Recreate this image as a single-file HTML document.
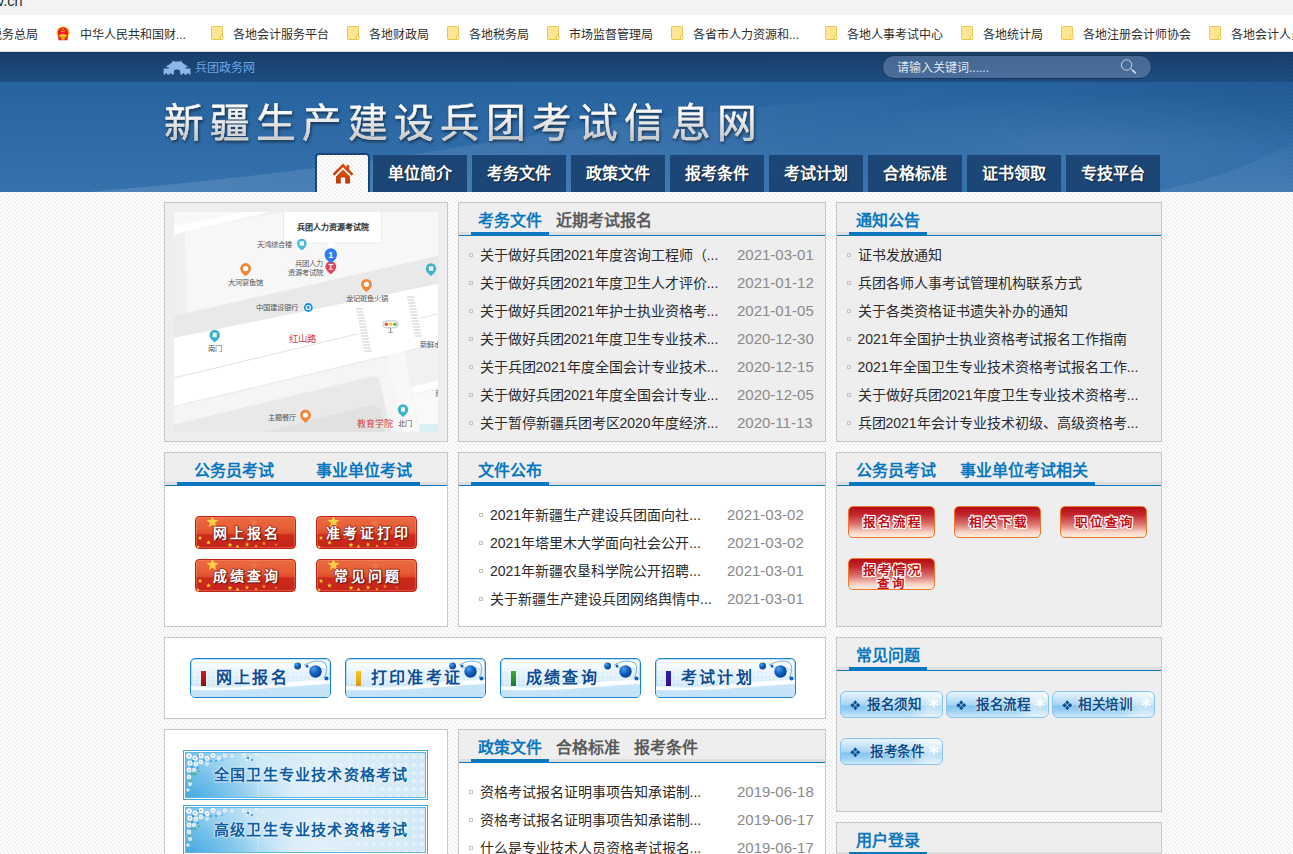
<!DOCTYPE html>
<html lang="zh-CN">
<head>
<meta charset="utf-8">
<title>新疆生产建设兵团考试信息网</title>
<style>
*{margin:0;padding:0;box-sizing:border-box;}
html,body{width:1293px;height:854px;overflow:hidden;}
body{font-family:"Liberation Sans",sans-serif;font-size:14px;color:#222;position:relative;
  background:#f4f4f4 repeating-linear-gradient(45deg,#ffffff 0,#ffffff 1.414px,#efefef 1.414px,#efefef 2.828px);}
a{color:inherit;text-decoration:none;}
.abs{position:absolute;}
/* browser chrome */
#urlbar{position:absolute;left:0;top:0;width:1293px;height:15px;background:#f1f3f4;overflow:hidden;}
#urlbar span{position:absolute;left:-3px;top:-7px;font-size:14.5px;line-height:16px;color:#2a2a2a;white-space:nowrap;}
#bm{position:absolute;left:0;top:15px;width:1293px;height:37px;background:#fff;overflow:hidden;border-bottom:1px solid #dadce0;}
#bm .t{position:absolute;top:12.5px;font-size:12px;line-height:14px;color:#2e2e2e;white-space:nowrap;}
#bm .f{position:absolute;top:11px;width:13px;height:14px;}
/* header */
#topbar{position:absolute;left:0;top:52px;width:1293px;height:30px;
  background:repeating-linear-gradient(45deg,rgba(0,0,0,0) 0,rgba(0,0,0,0) 1.414px,rgba(0,0,20,.09) 1.414px,rgba(0,0,20,.09) 2.828px),linear-gradient(#143a63 0,#19426e 2px,#1f5086 100%);}
#head{position:absolute;left:0;top:82px;width:1293px;height:110px;overflow:hidden;
  background:repeating-linear-gradient(45deg,rgba(0,0,0,0) 0,rgba(0,0,0,0) 1.414px,rgba(0,0,30,.07) 1.414px,rgba(0,0,30,.07) 2.828px),linear-gradient(#2866a4,#3876b3);}
#title{position:absolute;left:164px;top:96px;font-size:39.700px;font-weight:500;line-height:54px;letter-spacing:6.050px;white-space:nowrap;color:#ebebeb;background:linear-gradient(#ffffff 25%,#c6c6c6 82%);-webkit-background-clip:text;background-clip:text;-webkit-text-fill-color:transparent;-webkit-text-stroke:.35px rgba(235,235,235,.9);filter:drop-shadow(1px 2px 1.500px rgba(0,0,0,.5));}
.nav{position:absolute;top:155px;height:37px;width:94px;background:#1c4676;color:#fff;font-weight:bold;font-size:16px;line-height:37px;text-align:center;text-shadow:1px 1px 1px rgba(0,0,0,.6);white-space:nowrap;}
#home{position:absolute;left:315px;top:153px;width:55px;height:39px;background:#1b4577;border-radius:4px 4px 0 0;}
#home i{position:absolute;left:2px;top:2px;width:51px;height:37px;border-radius:2px 2px 0 0;
  background:#f6f6f6 repeating-linear-gradient(45deg,#ffffff 0,#ffffff 1.414px,#efefef 1.414px,#efefef 2.828px);}
/* panels */
.p{position:absolute;background:#eeeeee;border:1px solid #c6c6c6;overflow:hidden;}
.p.w{background:#fff;}
.ph{position:absolute;left:0;top:0;right:0;height:33px;background:#eeeeee;}
.ph:before{content:"";position:absolute;left:0;right:0;top:29px;height:3px;background:#dedede;}
.ph:after{content:"";position:absolute;left:0;right:0;top:32px;height:1px;background:#0a78bf;}
.ph b{position:absolute;top:6px;font-size:16px;line-height:24px;color:#0a78bf;white-space:nowrap;}
.ph b.g{color:#5a5a5a;}
.ph u{position:absolute;top:29px;height:4px;background:#0a78bf;z-index:2;}
ul.l{position:absolute;left:0;right:0;list-style:none;}
ul.l li{position:relative;height:28px;line-height:28px;font-size:14px;color:#2b2b2b;white-space:nowrap;}
ul.l li:before{content:"";position:absolute;left:10px;top:12px;width:4px;height:4px;border:1px solid #c4c4c4;box-sizing:border-box;}
ul.l li a{position:absolute;left:20.500px;top:0;}
ul.l li span{position:absolute;left:278px;top:0;color:#8a8a8a;font-size:15px;}
ul.l.i li:before{left:20px;}
ul.l.i li a{left:31px;}
ul.l.i li span{left:268px;}

/* red star buttons */
.rb{position:absolute;width:101px;height:33px;border-radius:4px;border:1px solid #bf2418;overflow:hidden;
 background:linear-gradient(#ea6a40 0,#e65c35 40%,#dd4a2b 55%,#cf2b1c 57%,#c6241b 100%);box-shadow:inset 0 0 0 1px rgba(255,160,120,.35);}
.rb svg{position:absolute;left:0;top:0;width:99px;height:31px;}
.rb span{position:absolute;left:0;right:0;top:.5px;line-height:32px;text-align:center;font-family:"Liberation Serif",serif;font-weight:bold;font-size:14px;letter-spacing:3px;text-indent:3px;color:#fff;white-space:nowrap;
 text-shadow:1px 1px 0 #7c1509,-1px 0 0 #9c2412,0 -1px 0 #9c2412,1px 0 0 #7c1509,0 1px 0 #7c1509;}
/* red gradient buttons */
.rg{position:absolute;width:87px;height:32px;border-radius:5px;border:1px solid #f2772c;overflow:hidden;
 background:linear-gradient(#b60c16 0,#c3262c 25%,#dc7670 58%,#f7d6c8 85%,#fdeee0 100%);}
.rg span{position:absolute;left:0;right:0;top:.5px;line-height:31px;text-align:center;font-family:"Liberation Serif",serif;font-weight:bold;font-size:12.500px;letter-spacing:2px;text-indent:2px;color:#c1101a;white-space:nowrap;
 text-shadow:1px 1px 0 #fff,-1px 0 0 #fff,0 -1px 0 #fff,1px 0 0 #fff,0 1px 0 #fff,-1px -1px 0 #fff,1px -1px 0 #fff,-1px 1px 0 #fff;}
.rg span.two{line-height:12.500px;top:6px;font-size:12.500px;}
/* blue big buttons */
.bb{position:absolute;width:141px;height:40px;border-radius:5px;border:1px solid #1a86d2;overflow:hidden;background:linear-gradient(#ffffff 0,#eef7fd 30%,#ddeffb 65%,#d2eafa 100%);box-shadow:inset 0 0 0 1px rgba(120,190,235,.5);}
.bb svg{position:absolute;left:0;top:0;width:139px;height:38px;}
.bb i{position:absolute;left:10px;top:12px;width:5px;height:15px;}
.bb span{position:absolute;left:25px;top:0;line-height:37px;font-family:"Liberation Serif",serif;font-weight:bold;font-size:16px;letter-spacing:2.2px;color:#0d4d93;white-space:nowrap;text-shadow:0 0 2px #fff,0 0 2px #fff;}
/* small blue buttons */
.sb{position:absolute;width:103px;height:27px;border-radius:6px;border:1px solid #86c4ec;overflow:hidden;
 background:linear-gradient(#e9f5fd 0,#c2e2f7 30%,#a5d5f4 52%,#80c4ef 56%,#9fd2f3 78%,#cfe9f9 100%);}
.sb:after{content:"";position:absolute;right:0;top:0;width:34px;height:25px;background:linear-gradient(90deg,rgba(255,255,255,0),rgba(255,255,255,.5) 60%,rgba(255,255,255,.45));}
.sb svg.d{position:absolute;left:8.500px;top:8px;width:10.500px;height:10.500px;right:auto;z-index:2;}
.sb span{position:absolute;z-index:2;top:0;line-height:25px;font-family:"Liberation Serif",serif;font-weight:bold;font-size:13.5px;letter-spacing:.6px;color:#0d4f8c;white-space:nowrap;text-shadow:0 0 1px #fff,0 0 2px #fff;}
.sb svg{position:absolute;right:0;top:1px;width:22px;height:22px;z-index:2;}
/* banners */
.bn{position:absolute;left:18px;width:245px;height:50px;border:1px solid #3fa5e1;background:#fff;padding:1px;}
.bn div{position:relative;width:241px;height:46px;border:1px solid #5fb6e7;overflow:hidden;background:linear-gradient(100deg,#6dbde9 0,#9ad2ef 12%,#cde8f6 30%,#e3f2fa 55%,#e8f4fb 100%);}
.bn svg{position:absolute;left:0;top:0;width:239px;height:44px;}
.bn span{position:absolute;left:28px;top:0;line-height:45px;font-family:"Liberation Serif",serif;font-weight:bold;font-size:15px;letter-spacing:1.2px;color:#0c5ea3;white-space:nowrap;text-shadow:0 0 2px #fff,0 0 2px #fff,0 0 1px #fff;}
</style>
</head>
<body>
<div id="urlbar"><span>v.cn</span></div>
<div id="bm">
<span class="t" style="left:-10px">税务总局</span>
<svg class="abs" style="left:56px;top:11px;width:14px;height:15px" viewBox="0 0 14 15"><circle cx="7" cy="6.8" r="6.6" fill="#f7d224"/><circle cx="7" cy="6.6" r="5.4" fill="#ee1c25"/><path d="M2 10 L12 10 L11.5 14.3 L2.5 14.3 Z" fill="#e22a1e"/><path d="M3.2 9.2 Q7 6.8 10.8 9.2 L10.2 11 L3.8 11 Z" fill="#f9c623"/><circle cx="7" cy="12.2" r="1.9" fill="#f3a21b"/><path d="M4.5 4.8 Q7 6.3 9.5 4.8" stroke="#f7c92a" stroke-width=".8" fill="none"/><circle cx="7" cy="3.2" r=".8" fill="#f7c92a"/></svg>
<span class="t" style="left:80px">中华人民共和国财...</span>
<svg class="f" style="left:211px" viewBox="0 0 13 14"><rect x="0.5" y="0.5" width="11" height="13" rx="1" fill="#ffe692" stroke="#eac54f"/><rect x="9.5" y="9.5" width="2.6" height="4" rx="0.8" fill="#fff3c4" stroke="#eac54f"/></svg><span class="t" style="left:233px">各地会计服务平台</span>
<svg class="f" style="left:347px" viewBox="0 0 13 14"><rect x="0.5" y="0.5" width="11" height="13" rx="1" fill="#ffe692" stroke="#eac54f"/><rect x="9.5" y="9.5" width="2.6" height="4" rx="0.8" fill="#fff3c4" stroke="#eac54f"/></svg><span class="t" style="left:369px">各地财政局</span>
<svg class="f" style="left:447px" viewBox="0 0 13 14"><rect x="0.5" y="0.5" width="11" height="13" rx="1" fill="#ffe692" stroke="#eac54f"/><rect x="9.5" y="9.5" width="2.6" height="4" rx="0.8" fill="#fff3c4" stroke="#eac54f"/></svg><span class="t" style="left:469px">各地税务局</span>
<svg class="f" style="left:547px" viewBox="0 0 13 14"><rect x="0.5" y="0.5" width="11" height="13" rx="1" fill="#ffe692" stroke="#eac54f"/><rect x="9.5" y="9.5" width="2.6" height="4" rx="0.8" fill="#fff3c4" stroke="#eac54f"/></svg><span class="t" style="left:569px">市场监督管理局</span>
<svg class="f" style="left:671px" viewBox="0 0 13 14"><rect x="0.5" y="0.5" width="11" height="13" rx="1" fill="#ffe692" stroke="#eac54f"/><rect x="9.5" y="9.5" width="2.6" height="4" rx="0.8" fill="#fff3c4" stroke="#eac54f"/></svg><span class="t" style="left:693px">各省市人力资源和...</span>
<svg class="f" style="left:825px" viewBox="0 0 13 14"><rect x="0.5" y="0.5" width="11" height="13" rx="1" fill="#ffe692" stroke="#eac54f"/><rect x="9.5" y="9.5" width="2.6" height="4" rx="0.8" fill="#fff3c4" stroke="#eac54f"/></svg><span class="t" style="left:847px">各地人事考试中心</span>
<svg class="f" style="left:961px" viewBox="0 0 13 14"><rect x="0.5" y="0.5" width="11" height="13" rx="1" fill="#ffe692" stroke="#eac54f"/><rect x="9.5" y="9.5" width="2.6" height="4" rx="0.8" fill="#fff3c4" stroke="#eac54f"/></svg><span class="t" style="left:983px">各地统计局</span>
<svg class="f" style="left:1061px" viewBox="0 0 13 14"><rect x="0.5" y="0.5" width="11" height="13" rx="1" fill="#ffe692" stroke="#eac54f"/><rect x="9.5" y="9.5" width="2.6" height="4" rx="0.8" fill="#fff3c4" stroke="#eac54f"/></svg><span class="t" style="left:1083px">各地注册会计师协会</span>
<svg class="f" style="left:1209px" viewBox="0 0 13 14"><rect x="0.5" y="0.5" width="11" height="13" rx="1" fill="#ffe692" stroke="#eac54f"/><rect x="9.5" y="9.5" width="2.6" height="4" rx="0.8" fill="#fff3c4" stroke="#eac54f"/></svg><span class="t" style="left:1231px">各地会计人员继续教育</span>
</div>
<div id="topbar"></div>
<div id="head"><svg class="abs" style="left:0;top:0;width:1293px;height:110px" viewBox="0 0 1293 110" preserveAspectRatio="none"><defs><linearGradient id="sw" x1="0" y1="0" x2="1" y2="0"><stop offset="0" stop-color="#fff" stop-opacity=".13"/><stop offset=".5" stop-color="#fff" stop-opacity=".07"/><stop offset="1" stop-color="#fff" stop-opacity="0"/></linearGradient><linearGradient id="sw2" x1="0" y1="0" x2="0" y2="1"><stop offset="0" stop-color="#fff" stop-opacity=".02"/><stop offset="1" stop-color="#fff" stop-opacity=".08"/></linearGradient><radialGradient id="gl" cx=".5" cy=".5" r=".5"><stop offset="0" stop-color="#fff" stop-opacity=".07"/><stop offset="1" stop-color="#fff" stop-opacity="0"/></radialGradient><linearGradient id="dk" x1="0" y1="0" x2="1" y2="0"><stop offset="0" stop-color="#0b2a55" stop-opacity="0"/><stop offset="1" stop-color="#0b2a55" stop-opacity=".16"/></linearGradient><linearGradient id="dkv" x1="0" y1="0" x2="0" y2="1"><stop offset="0" stop-color="#fff"/><stop offset="1" stop-color="#000"/></linearGradient><mask id="dm2"><rect x="1000" y="0" width="293" height="70" fill="url(#dkv)"/></mask></defs>
<path d="M90 110 Q300 92 480 62 T860 16 L960 10 L960 110 Z" fill="url(#sw)"/>
<path d="M1150 110 Q1230 96 1293 60 L1293 110 Z" fill="url(#sw2)"/>
<ellipse cx="1080" cy="62" rx="260" ry="52" fill="url(#gl)"/>
<rect x="1000" y="0" width="293" height="70" fill="url(#dk)" mask="url(#dm2)"/>
</svg></div>
<div id="title">新疆生产建设兵团考试信息网</div>
<div id="home"><i></i></div>

<svg class="abs" style="left:163px;top:60px;width:28px;height:15px" viewBox="0 0 28 15"><path fill="#8db7e6" d="M9.5 0.6 L10.3 0.6 L10.6 1.6 L17.4 1.6 L17.7 0.6 L18.5 0.6 L18.6 2 Q21 4.6 24.6 6.2 L24.6 7.2 L22.4 7.2 L22.4 8.4 L27.4 8.4 L27.4 14.6 L25.6 14.6 L25.6 13.2 L24 13.2 L24 14.6 L21.2 14.6 L21.2 13.2 L19.6 13.2 L19.6 14.6 L17.2 14.6 L17.2 12 Q17.2 9.6 14 9.6 Q10.8 9.6 10.8 12 L10.8 14.6 L8.4 14.6 L8.4 13.2 L6.8 13.2 L6.8 14.6 L4 14.6 L4 13.2 L2.4 13.2 L2.4 14.6 L0.6 14.6 L0.6 8.4 L5.6 8.4 L5.6 7.2 L3.4 7.2 L3.4 6.2 Q7 4.6 9.4 2 Z"/></svg>
<div class="abs" style="left:195px;top:60px;font-size:12px;line-height:16px;color:#6aa6ec;white-space:nowrap;">兵团政务网</div>
<div class="abs" id="search" style="left:882px;top:55px;width:270px;height:24px;border-radius:12px;background:rgba(135,160,198,.42);border:1px solid #15345a;"></div>
<div class="abs" style="left:897px;top:60px;font-size:12px;line-height:16px;color:#dfe8f3;white-space:nowrap;">请输入关键词......</div>
<svg class="abs" style="left:1118px;top:57px;width:22px;height:20px" viewBox="0 0 22 20"><circle cx="8.600" cy="8" r="5.200" fill="none" stroke="#d5dde7" stroke-width=".9"/><path d="M12.600 11.600 L14.400 13.200" stroke="#d5dde7" stroke-width=".9" stroke-linecap="round"/><path d="M14.600 13.400 L17.400 15.800" stroke="#d5dde7" stroke-width="1.700" stroke-linecap="round"/></svg>
<svg class="abs" style="left:331px;top:162px;width:24px;height:23px" viewBox="0 0 24 23"><defs><linearGradient id="hg" x1="0" y1="0" x2="0" y2="1"><stop offset="0" stop-color="#e5510f"/><stop offset="1" stop-color="#b53a06"/></linearGradient></defs><path fill="url(#hg)" d="M12 1.6 L15.6 5.2 L15.6 3 L18.2 3 L18.2 7.8 L22.4 12 L20.6 13.6 L12 5.2 L3.4 13.6 L1.6 12 Z"/><path fill="url(#hg)" d="M12 7.6 L19 14.4 L19 21.6 L14.2 21.6 L14.2 15.6 L9.8 15.6 L9.8 21.6 L5 21.6 L5 14.4 Z"/></svg>
<a class="nav" style="left:373px">单位简介</a>
<a class="nav" style="left:472px">考务文件</a>
<a class="nav" style="left:571px">政策文件</a>
<a class="nav" style="left:670px">报考条件</a>
<a class="nav" style="left:769px">考试计划</a>
<a class="nav" style="left:868px">合格标准</a>
<a class="nav" style="left:967px">证书领取</a>
<a class="nav" style="left:1066px">专技平台</a>

<!-- ROW 1 -->
<div class="p" id="p1" style="left:164px;top:202px;width:284px;height:240px;"><svg class="abs" style="left:9px;top:9px;width:264px;height:220px" viewBox="0 0 264 220" font-family="Liberation Sans, sans-serif">
<rect width="264" height="220" fill="#f1f1f1"/>
<!-- top-left road -->
<polygon points="0,0 95,0 0,24" fill="#f8f8f8"/>
<polygon points="0,14 70,0 95,0 0,22" fill="#ffffff"/>
<!-- north block -->
<polygon points="11,19 264,-30 264,44 13,101" fill="#f7f7f7"/>
<polygon points="0,24 11,19 13,101 0,105" fill="#efefef"/>
<!-- sidewalk band -->
<polygon points="0,104 13,101 264,44 264,72 0,126" fill="#e9e9e9"/>
<!-- main road -->
<polygon points="0,126 264,72 264,132 236,138 213,143.500 0,195" fill="#ffffff"/>
<polyline points="0,166 183,122" fill="none" stroke="#e2e2e2" stroke-width="1"/>
<polyline points="247,106 264,102" fill="none" stroke="#e2e2e2" stroke-width="1"/>
<!-- south block -->
<path d="M0 194.500 L207 145.300 Q213.500 144 216 150 L228 220 L0 220 Z" fill="#f5f5f5"/>
<path d="M0 194.500 L207 145.300 Q213.500 144 216 150 L228 220" fill="none" stroke="#e3e3e3" stroke-width=".8"/>
<path d="M0 212.500 L198 164.500 Q203.500 163.500 205.500 168.500 L217.500 220 L0 220 Z" fill="#e9e9e9"/>
<polygon points="90,220 199,192.500 207,197 211,220" fill="#e1e1e1"/>
<!-- vertical road -->
<polygon points="213,143.500 231,139 245,220 228,220" fill="#f8f8f8"/>
<!-- right-bottom block -->
<path d="M231 143 Q231 139.500 236 138 L264 131.500 L264 220 L245 220 Z" fill="#f1f1f1"/>
<path d="M231 143 Q231 139.500 236 138 L264 131.500" fill="none" stroke="#e3e3e3" stroke-width=".8"/>
<polygon points="237.500,175 264,168.600 264,175.500 238.700,182" fill="#ffffff"/>
<polygon points="239,183 264,177 264,220 245.500,220" fill="#f9f9f9"/>
<rect x="245.500" y="212" width="18.500" height="8" fill="#d9eff3"/>
<!-- crosswalks -->
<g stroke="#dcdcdc" stroke-width="1.4">
<path d="M182 97h7M182.6 100h7M183.2 103h7M183.8 106h7M184.4 109h7M185 112h7M185.6 115h7M186.2 118h7M186.8 121h7M187.4 124h7M188 127h7M188.6 130h7M189.2 133h7M189.8 136h7M190.4 139h7"/>
<path d="M233 85h7M233.6 88h7M234.2 91h7M234.8 94h7M235.4 97h7M236 100h7M236.6 103h7M237.2 106h7M237.8 109h7M238.4 112h7M239 115h7M239.6 118h7M240.2 121h7M240.8 124h7"/>
</g>
<!-- info window -->
<rect x="109.500" y="-2" width="98" height="33" fill="#ffffff" stroke="#e2e2e2" stroke-width="0.6"/>
<polygon points="152,30.600 162,30.600 157,36" fill="#ffffff"/>
<text x="158.600" y="17.500" font-size="8" font-weight="bold" fill="#333" text-anchor="middle">兵团人力资源考试院</text>
<!-- labels -->
<g font-size="7.300" fill="#555" transform="translate(0,-0.900)">
<text x="83" y="35.500">天鸿综合楼</text>
<text x="149" y="54.500" text-anchor="end">兵团人力</text>
<text x="149" y="64.300" text-anchor="end">资源考试院</text>
<text x="71.600" y="74.200" text-anchor="middle">大河宴鱼馆</text>
<text x="192.500" y="89.700" text-anchor="middle">龙记斑鱼火锅</text>
<text x="82" y="98.600">中国建设银行</text>
<text x="40.700" y="140" text-anchor="middle">南门</text>
<text x="246" y="135.800">新鲜水</text>
<text x="94" y="208.800">主题餐厅</text>
<text x="223.500" y="214.500">北门</text>
<text x="261" y="185">商</text>
</g>
<text x="128" y="129.700" font-size="9.400" fill="#d63a42" text-anchor="middle">红山路</text>
<text x="201" y="214.600" font-size="9" fill="#d63a42" text-anchor="middle">教育学院</text>
<path d="M123.00 31.50 A4.8 4.8 0 1 1 132.60 31.50 Q132.60 35.10 127.80 38.32 Q123.00 35.10 123.00 31.50 Z" fill="#49b9d9"/><rect x="125.600" y="29.300" width="4.400" height="4.400" fill="#e9f7fb"/><path d="M66.20 56.50 A5.4 5.4 0 1 1 77.00 56.50 Q77.00 60.55 71.60 64.17 Q66.20 60.55 66.20 56.50 Z" fill="#f0873c"/><circle cx="71.600" cy="56.500" r="2.600" fill="#fff"/><path d="M187.10 72.30 A5.4 5.4 0 1 1 197.90 72.30 Q197.90 76.35 192.50 79.97 Q187.10 76.35 187.10 72.30 Z" fill="#f0873c"/><circle cx="192.500" cy="72.300" r="2.600" fill="#fff"/><path d="M126.10 203.00 A5.4 5.4 0 1 1 136.90 203.00 Q136.90 207.05 131.50 210.67 Q126.10 207.05 126.10 203.00 Z" fill="#f0873c"/><circle cx="131.500" cy="203" r="2.600" fill="#fff"/><path d="M35.50 123.00 A5.2 5.2 0 1 1 45.90 123.00 Q45.90 126.90 40.70 130.38 Q35.50 126.90 35.50 123.00 Z" fill="#3fb1cf"/><rect x="38.700" y="120.800" width="4" height="4.400" fill="#e9f7fb"/><path d="M251.80 56.50 A5.2 5.2 0 1 1 262.20 56.50 Q262.20 60.40 257.00 63.88 Q251.80 60.40 251.80 56.50 Z" fill="#3fb1cf"/><rect x="254.800" y="54.300" width="4.400" height="4.400" fill="#e9f7fb"/><path d="M223.80 197.50 A5.2 5.2 0 1 1 234.20 197.50 Q234.20 201.40 229.00 204.88 Q223.80 201.40 223.80 197.50 Z" fill="#3fb1cf"/><rect x="227" y="195.300" width="4" height="4.400" fill="#e9f7fb"/><circle cx="134.300" cy="95.500" r="4.400" fill="#1b8fe6"/><circle cx="134.300" cy="95.500" r="2" fill="none" stroke="#fff" stroke-width="1.200"/><path d="M151.40 54.60 A5.4 5.4 0 1 1 162.20 54.60 Q162.20 58.65 156.80 62.27 Q151.40 58.65 151.40 54.60 Z" fill="#e0455c"/><path d="M154.300 52.600l5 0M156.800 52.600l0 4.600M154.800 57.200l4 0" stroke="#fff" stroke-width="1" fill="none"/><path d="M150.60 42.50 A6.2 6.2 0 1 1 163.00 42.50 Q163.00 47.15 156.80 51.30 Q150.60 47.15 150.60 42.50 Z" fill="#2c7cf2"/><text x="156.800" y="45.800" font-size="9" font-weight="bold" fill="#fff" text-anchor="middle">1</text><rect x="216" y="116" width="1.200" height="4.500" fill="#999"/><rect x="214.400" y="120" width="4.400" height=".9" fill="#999"/><rect x="208.800" y="108.800" width="15.200" height="7" rx="3.500" fill="#fff" stroke="#aaa" stroke-width="0.700"/><circle cx="212.300" cy="112.300" r="1.800" fill="#e8503e"/><circle cx="216.600" cy="112.300" r="1.800" fill="#f1c232"/><circle cx="220.900" cy="112.300" r="1.800" fill="#57b85c"/></svg></div>
<div class="p" id="p2" style="left:458px;top:202px;width:368px;height:240px;">
  <div class="ph"><b style="left:19px">考务文件</b><b class="g" style="left:97px">近期考试报名</b><u style="left:12px;width:78px"></u></div>
  <ul class="l" style="top:38px">
    <li><a>关于做好兵团2021年度咨询工程师（...</a><span>2021-03-01</span></li>
    <li><a>关于做好兵团2021年度卫生人才评价...</a><span>2021-01-12</span></li>
    <li><a>关于做好兵团2021年护士执业资格考...</a><span>2021-01-05</span></li>
    <li><a>关于做好兵团2021年度卫生专业技术...</a><span>2020-12-30</span></li>
    <li><a>关于兵团2021年度全国会计专业技术...</a><span>2020-12-15</span></li>
    <li><a>关于做好兵团2021年度全国会计专业...</a><span>2020-12-05</span></li>
    <li><a>关于暂停新疆兵团考区2020年度经济...</a><span>2020-11-13</span></li>
  </ul>
</div>
<div class="p" id="p3" style="left:836px;top:202px;width:326px;height:240px;">
  <div class="ph"><b style="left:19px">通知公告</b><u style="left:12px;width:78px"></u></div>
  <ul class="l" style="top:38px">
    <li><a>证书发放通知</a></li>
    <li><a>兵团各师人事考试管理机构联系方式</a></li>
    <li><a>关于各类资格证书遗失补办的通知</a></li>
    <li><a>2021年全国护士执业资格考试报名工作指南</a></li>
    <li><a>2021年全国卫生专业技术资格考试报名工作...</a></li>
    <li><a>关于做好兵团2021年度卫生专业技术资格考...</a></li>
    <li><a>兵团2021年会计专业技术初级、高级资格考...</a></li>
  </ul>
</div>

<!-- ROW 2 -->
<div class="p w" id="p4" style="left:164px;top:452px;width:284px;height:175px;">
  <div class="ph"><b style="left:28.5px">公务员考试</b><b style="left:151px">事业单位考试</b><u style="left:12px;width:243px"></u></div>
<a class="rb" style="left:30px;top:63px"><svg viewBox="0 0 99 31"><polygon points="16.5,-1.4 18.1,2.8 22.6,3.0 19.1,5.8 20.3,10.2 16.5,7.7 12.7,10.2 13.9,5.8 10.4,3.0 14.9,2.8" fill="#f9cf45" opacity="1"/><polygon points="4.0,18.6 4.6,20.2 6.3,20.3 5.0,21.3 5.4,22.9 4.0,22.0 2.6,22.9 3.0,21.3 1.7,20.3 3.4,20.2" fill="#ffd92e" opacity="1"/><polygon points="12.5,23.0 13.1,24.7 14.9,24.7 13.5,25.8 14.0,27.5 12.5,26.6 11.0,27.5 11.5,25.8 10.1,24.7 11.9,24.7" fill="#ffd92e" opacity="1"/><polygon points="2.0,28.0 2.5,29.3 3.9,29.4 2.8,30.3 3.2,31.6 2.0,30.8 0.8,31.6 1.2,30.3 0.1,29.4 1.5,29.3" fill="#ffd92e" opacity="1"/><polygon points="34.0,25.4 34.6,27.1 36.5,27.2 35.0,28.3 35.5,30.1 34.0,29.1 32.5,30.1 33.0,28.3 31.5,27.2 33.4,27.1" fill="#ffd92e" opacity="1"/><polygon points="41.5,27.5 42.0,28.8 43.4,28.9 42.3,29.8 42.7,31.1 41.5,30.3 40.3,31.1 40.7,29.8 39.6,28.9 41.0,28.8" fill="#ffd92e" opacity="1"/><polygon points="51.0,25.1 51.6,26.7 53.3,26.8 52.0,27.8 52.4,29.4 51.0,28.5 49.6,29.4 50.0,27.8 48.7,26.8 50.4,26.7" fill="#ffd92e" opacity="0.9"/><polygon points="60.0,27.2 60.4,28.4 61.7,28.4 60.7,29.2 61.1,30.5 60.0,29.8 58.9,30.5 59.3,29.2 58.3,28.4 59.6,28.4" fill="#ffd92e" opacity="0.8"/><polygon points="68.0,24.3 68.5,25.8 70.1,25.8 68.9,26.8 69.3,28.3 68.0,27.4 66.7,28.3 67.1,26.8 65.9,25.8 67.5,25.8" fill="#ffd92e" opacity="0.6"/><polygon points="80.0,25.7 80.4,26.9 81.7,26.9 80.7,27.7 81.1,29.0 80.0,28.3 78.9,29.0 79.3,27.7 78.3,26.9 79.6,26.9" fill="#ffd92e" opacity="0.45"/><polygon points="58.0,1.0 59.2,4.3 62.8,4.5 60.0,6.6 60.9,10.0 58.0,8.1 55.1,10.0 56.0,6.6 53.2,4.5 56.8,4.3" fill="#f08a5a" opacity="0.45"/><polygon points="28.0,18.4 28.4,19.5 29.5,19.5 28.6,20.2 28.9,21.3 28.0,20.7 27.1,21.3 27.4,20.2 26.5,19.5 27.6,19.5" fill="#ffd92e" opacity="0.7"/></svg><span>网上报名</span></a>
<a class="rb" style="left:151px;top:63px"><svg viewBox="0 0 99 31"><polygon points="16.5,-1.4 18.1,2.8 22.6,3.0 19.1,5.8 20.3,10.2 16.5,7.7 12.7,10.2 13.9,5.8 10.4,3.0 14.9,2.8" fill="#f9cf45" opacity="1"/><polygon points="4.0,18.6 4.6,20.2 6.3,20.3 5.0,21.3 5.4,22.9 4.0,22.0 2.6,22.9 3.0,21.3 1.7,20.3 3.4,20.2" fill="#ffd92e" opacity="1"/><polygon points="12.5,23.0 13.1,24.7 14.9,24.7 13.5,25.8 14.0,27.5 12.5,26.6 11.0,27.5 11.5,25.8 10.1,24.7 11.9,24.7" fill="#ffd92e" opacity="1"/><polygon points="2.0,28.0 2.5,29.3 3.9,29.4 2.8,30.3 3.2,31.6 2.0,30.8 0.8,31.6 1.2,30.3 0.1,29.4 1.5,29.3" fill="#ffd92e" opacity="1"/><polygon points="34.0,25.4 34.6,27.1 36.5,27.2 35.0,28.3 35.5,30.1 34.0,29.1 32.5,30.1 33.0,28.3 31.5,27.2 33.4,27.1" fill="#ffd92e" opacity="1"/><polygon points="41.5,27.5 42.0,28.8 43.4,28.9 42.3,29.8 42.7,31.1 41.5,30.3 40.3,31.1 40.7,29.8 39.6,28.9 41.0,28.8" fill="#ffd92e" opacity="1"/><polygon points="51.0,25.1 51.6,26.7 53.3,26.8 52.0,27.8 52.4,29.4 51.0,28.5 49.6,29.4 50.0,27.8 48.7,26.8 50.4,26.7" fill="#ffd92e" opacity="0.9"/><polygon points="60.0,27.2 60.4,28.4 61.7,28.4 60.7,29.2 61.1,30.5 60.0,29.8 58.9,30.5 59.3,29.2 58.3,28.4 59.6,28.4" fill="#ffd92e" opacity="0.8"/><polygon points="68.0,24.3 68.5,25.8 70.1,25.8 68.9,26.8 69.3,28.3 68.0,27.4 66.7,28.3 67.1,26.8 65.9,25.8 67.5,25.8" fill="#ffd92e" opacity="0.6"/><polygon points="80.0,25.7 80.4,26.9 81.7,26.9 80.7,27.7 81.1,29.0 80.0,28.3 78.9,29.0 79.3,27.7 78.3,26.9 79.6,26.9" fill="#ffd92e" opacity="0.45"/><polygon points="58.0,1.0 59.2,4.3 62.8,4.5 60.0,6.6 60.9,10.0 58.0,8.1 55.1,10.0 56.0,6.6 53.2,4.5 56.8,4.3" fill="#f08a5a" opacity="0.45"/><polygon points="28.0,18.4 28.4,19.5 29.5,19.5 28.6,20.2 28.9,21.3 28.0,20.7 27.1,21.3 27.4,20.2 26.5,19.5 27.6,19.5" fill="#ffd92e" opacity="0.7"/></svg><span>准考证打印</span></a>
<a class="rb" style="left:30px;top:106px"><svg viewBox="0 0 99 31"><polygon points="16.5,-1.4 18.1,2.8 22.6,3.0 19.1,5.8 20.3,10.2 16.5,7.7 12.7,10.2 13.9,5.8 10.4,3.0 14.9,2.8" fill="#f9cf45" opacity="1"/><polygon points="4.0,18.6 4.6,20.2 6.3,20.3 5.0,21.3 5.4,22.9 4.0,22.0 2.6,22.9 3.0,21.3 1.7,20.3 3.4,20.2" fill="#ffd92e" opacity="1"/><polygon points="12.5,23.0 13.1,24.7 14.9,24.7 13.5,25.8 14.0,27.5 12.5,26.6 11.0,27.5 11.5,25.8 10.1,24.7 11.9,24.7" fill="#ffd92e" opacity="1"/><polygon points="2.0,28.0 2.5,29.3 3.9,29.4 2.8,30.3 3.2,31.6 2.0,30.8 0.8,31.6 1.2,30.3 0.1,29.4 1.5,29.3" fill="#ffd92e" opacity="1"/><polygon points="34.0,25.4 34.6,27.1 36.5,27.2 35.0,28.3 35.5,30.1 34.0,29.1 32.5,30.1 33.0,28.3 31.5,27.2 33.4,27.1" fill="#ffd92e" opacity="1"/><polygon points="41.5,27.5 42.0,28.8 43.4,28.9 42.3,29.8 42.7,31.1 41.5,30.3 40.3,31.1 40.7,29.8 39.6,28.9 41.0,28.8" fill="#ffd92e" opacity="1"/><polygon points="51.0,25.1 51.6,26.7 53.3,26.8 52.0,27.8 52.4,29.4 51.0,28.5 49.6,29.4 50.0,27.8 48.7,26.8 50.4,26.7" fill="#ffd92e" opacity="0.9"/><polygon points="60.0,27.2 60.4,28.4 61.7,28.4 60.7,29.2 61.1,30.5 60.0,29.8 58.9,30.5 59.3,29.2 58.3,28.4 59.6,28.4" fill="#ffd92e" opacity="0.8"/><polygon points="68.0,24.3 68.5,25.8 70.1,25.8 68.9,26.8 69.3,28.3 68.0,27.4 66.7,28.3 67.1,26.8 65.9,25.8 67.5,25.8" fill="#ffd92e" opacity="0.6"/><polygon points="80.0,25.7 80.4,26.9 81.7,26.9 80.7,27.7 81.1,29.0 80.0,28.3 78.9,29.0 79.3,27.7 78.3,26.9 79.6,26.9" fill="#ffd92e" opacity="0.45"/><polygon points="58.0,1.0 59.2,4.3 62.8,4.5 60.0,6.6 60.9,10.0 58.0,8.1 55.1,10.0 56.0,6.6 53.2,4.5 56.8,4.3" fill="#f08a5a" opacity="0.45"/><polygon points="28.0,18.4 28.4,19.5 29.5,19.5 28.6,20.2 28.9,21.3 28.0,20.7 27.1,21.3 27.4,20.2 26.5,19.5 27.6,19.5" fill="#ffd92e" opacity="0.7"/></svg><span>成绩查询</span></a>
<a class="rb" style="left:151px;top:106px"><svg viewBox="0 0 99 31"><polygon points="16.5,-1.4 18.1,2.8 22.6,3.0 19.1,5.8 20.3,10.2 16.5,7.7 12.7,10.2 13.9,5.8 10.4,3.0 14.9,2.8" fill="#f9cf45" opacity="1"/><polygon points="4.0,18.6 4.6,20.2 6.3,20.3 5.0,21.3 5.4,22.9 4.0,22.0 2.6,22.9 3.0,21.3 1.7,20.3 3.4,20.2" fill="#ffd92e" opacity="1"/><polygon points="12.5,23.0 13.1,24.7 14.9,24.7 13.5,25.8 14.0,27.5 12.5,26.6 11.0,27.5 11.5,25.8 10.1,24.7 11.9,24.7" fill="#ffd92e" opacity="1"/><polygon points="2.0,28.0 2.5,29.3 3.9,29.4 2.8,30.3 3.2,31.6 2.0,30.8 0.8,31.6 1.2,30.3 0.1,29.4 1.5,29.3" fill="#ffd92e" opacity="1"/><polygon points="34.0,25.4 34.6,27.1 36.5,27.2 35.0,28.3 35.5,30.1 34.0,29.1 32.5,30.1 33.0,28.3 31.5,27.2 33.4,27.1" fill="#ffd92e" opacity="1"/><polygon points="41.5,27.5 42.0,28.8 43.4,28.9 42.3,29.8 42.7,31.1 41.5,30.3 40.3,31.1 40.7,29.8 39.6,28.9 41.0,28.8" fill="#ffd92e" opacity="1"/><polygon points="51.0,25.1 51.6,26.7 53.3,26.8 52.0,27.8 52.4,29.4 51.0,28.5 49.6,29.4 50.0,27.8 48.7,26.8 50.4,26.7" fill="#ffd92e" opacity="0.9"/><polygon points="60.0,27.2 60.4,28.4 61.7,28.4 60.7,29.2 61.1,30.5 60.0,29.8 58.9,30.5 59.3,29.2 58.3,28.4 59.6,28.4" fill="#ffd92e" opacity="0.8"/><polygon points="68.0,24.3 68.5,25.8 70.1,25.8 68.9,26.8 69.3,28.3 68.0,27.4 66.7,28.3 67.1,26.8 65.9,25.8 67.5,25.8" fill="#ffd92e" opacity="0.6"/><polygon points="80.0,25.7 80.4,26.9 81.7,26.9 80.7,27.7 81.1,29.0 80.0,28.3 78.9,29.0 79.3,27.7 78.3,26.9 79.6,26.9" fill="#ffd92e" opacity="0.45"/><polygon points="58.0,1.0 59.2,4.3 62.8,4.5 60.0,6.6 60.9,10.0 58.0,8.1 55.1,10.0 56.0,6.6 53.2,4.5 56.8,4.3" fill="#f08a5a" opacity="0.45"/><polygon points="28.0,18.4 28.4,19.5 29.5,19.5 28.6,20.2 28.9,21.3 28.0,20.7 27.1,21.3 27.4,20.2 26.5,19.5 27.6,19.5" fill="#ffd92e" opacity="0.7"/></svg><span>常见问题</span></a>
</div>
<div class="p w" id="p5" style="left:458px;top:452px;width:368px;height:175px;">
  <div class="ph"><b style="left:19px">文件公布</b><u style="left:12px;width:78px"></u></div>
  <ul class="l i" style="top:48px">
    <li><a>2021年新疆生产建设兵团面向社...</a><span>2021-03-02</span></li>
    <li><a>2021年塔里木大学面向社会公开...</a><span>2021-03-02</span></li>
    <li><a>2021年新疆农垦科学院公开招聘...</a><span>2021-03-01</span></li>
    <li><a>关于新疆生产建设兵团网络舆情中...</a><span>2021-03-01</span></li>
  </ul>
</div>
<div class="p" id="p6" style="left:836px;top:452px;width:326px;height:175px;">
  <div class="ph"><b style="left:19px">公务员考试</b><b style="left:123px">事业单位考试相关</b><u style="left:12px;width:246px"></u></div>
<a class="rg" style="left:11px;top:53px"><span>报名流程</span></a>
<a class="rg" style="left:117px;top:53px"><span>相关下载</span></a>
<a class="rg" style="left:223px;top:53px"><span>职位查询</span></a>
<a class="rg" style="left:11px;top:105px"><span class="two">报考情况<br>查询</span></a>
</div>

<!-- ROW 3 -->
<div class="p w" id="p7" style="left:164px;top:637px;width:662px;height:82px;">
<a class="bb" style="left:25px;top:20px"><svg viewBox="0 0 139 38"><defs><radialGradient id="sp" cx=".35" cy=".3" r=".8"><stop offset="0" stop-color="#4fa0e6"/><stop offset=".5" stop-color="#0f5fbf"/><stop offset="1" stop-color="#083a8c"/></radialGradient><pattern id="gd" width="4" height="4" patternUnits="userSpaceOnUse"><rect x=".5" y=".5" width="2.600" height="2.600" fill="#bfe0f6"/></pattern><linearGradient id="gf" x1="0" y1="0" x2="0" y2="1"><stop offset="0" stop-color="#fff" stop-opacity="0"/><stop offset="1" stop-color="#fff" stop-opacity="1"/></linearGradient><mask id="gm"><rect y="8" width="139" height="22" fill="url(#gf)"/></mask></defs>
<rect y="8" width="139" height="22" fill="url(#gd)" mask="url(#gm)" opacity=".75"/>
<path d="M0 27 Q35 31 70 26 T139 21 L139 25 Q100 27 70 30 T0 31 Z" fill="#ffffff" opacity=".9"/>
<path d="M0 31 Q35 32 70 30 T139 25 L139 38 L0 38 Z" fill="#c6e5f8"/><rect y="31" width="139" height="7" fill="url(#gd)" opacity=".9"/>
<path d="M113 6 Q126 -1 134 4 Q138 10 133 19" fill="none" stroke="#5c9bd8" stroke-width=".8"/><path d="M116 9 Q128 6 136 12" fill="none" stroke="#8dbbe6" stroke-width=".6"/>
<circle cx="124.500" cy="12.500" r="6.200" fill="url(#sp)"/><circle cx="106.600" cy="7" r="3.400" fill="url(#sp)"/><circle cx="116" cy="7" r="1.500" fill="#1560b8"/><circle cx="135.500" cy="19.500" r="2" fill="#1560b8"/></svg><i style="background:linear-gradient(#cf1a20,#8c0c10)"></i><span>网上报名</span></a>
<a class="bb" style="left:180px;top:20px"><svg viewBox="0 0 139 38"><defs><radialGradient id="sp" cx=".35" cy=".3" r=".8"><stop offset="0" stop-color="#4fa0e6"/><stop offset=".5" stop-color="#0f5fbf"/><stop offset="1" stop-color="#083a8c"/></radialGradient><pattern id="gd" width="4" height="4" patternUnits="userSpaceOnUse"><rect x=".5" y=".5" width="2.600" height="2.600" fill="#bfe0f6"/></pattern><linearGradient id="gf" x1="0" y1="0" x2="0" y2="1"><stop offset="0" stop-color="#fff" stop-opacity="0"/><stop offset="1" stop-color="#fff" stop-opacity="1"/></linearGradient><mask id="gm"><rect y="8" width="139" height="22" fill="url(#gf)"/></mask></defs>
<rect y="8" width="139" height="22" fill="url(#gd)" mask="url(#gm)" opacity=".75"/>
<path d="M0 27 Q35 31 70 26 T139 21 L139 25 Q100 27 70 30 T0 31 Z" fill="#ffffff" opacity=".9"/>
<path d="M0 31 Q35 32 70 30 T139 25 L139 38 L0 38 Z" fill="#c6e5f8"/><rect y="31" width="139" height="7" fill="url(#gd)" opacity=".9"/>
<path d="M113 6 Q126 -1 134 4 Q138 10 133 19" fill="none" stroke="#5c9bd8" stroke-width=".8"/><path d="M116 9 Q128 6 136 12" fill="none" stroke="#8dbbe6" stroke-width=".6"/>
<circle cx="124.500" cy="12.500" r="6.200" fill="url(#sp)"/><circle cx="106.600" cy="7" r="3.400" fill="url(#sp)"/><circle cx="116" cy="7" r="1.500" fill="#1560b8"/><circle cx="135.500" cy="19.500" r="2" fill="#1560b8"/></svg><i style="background:linear-gradient(#f8c820,#e2960e)"></i><span>打印准考证</span></a>
<a class="bb" style="left:335px;top:20px"><svg viewBox="0 0 139 38"><defs><radialGradient id="sp" cx=".35" cy=".3" r=".8"><stop offset="0" stop-color="#4fa0e6"/><stop offset=".5" stop-color="#0f5fbf"/><stop offset="1" stop-color="#083a8c"/></radialGradient><pattern id="gd" width="4" height="4" patternUnits="userSpaceOnUse"><rect x=".5" y=".5" width="2.600" height="2.600" fill="#bfe0f6"/></pattern><linearGradient id="gf" x1="0" y1="0" x2="0" y2="1"><stop offset="0" stop-color="#fff" stop-opacity="0"/><stop offset="1" stop-color="#fff" stop-opacity="1"/></linearGradient><mask id="gm"><rect y="8" width="139" height="22" fill="url(#gf)"/></mask></defs>
<rect y="8" width="139" height="22" fill="url(#gd)" mask="url(#gm)" opacity=".75"/>
<path d="M0 27 Q35 31 70 26 T139 21 L139 25 Q100 27 70 30 T0 31 Z" fill="#ffffff" opacity=".9"/>
<path d="M0 31 Q35 32 70 30 T139 25 L139 38 L0 38 Z" fill="#c6e5f8"/><rect y="31" width="139" height="7" fill="url(#gd)" opacity=".9"/>
<path d="M113 6 Q126 -1 134 4 Q138 10 133 19" fill="none" stroke="#5c9bd8" stroke-width=".8"/><path d="M116 9 Q128 6 136 12" fill="none" stroke="#8dbbe6" stroke-width=".6"/>
<circle cx="124.500" cy="12.500" r="6.200" fill="url(#sp)"/><circle cx="106.600" cy="7" r="3.400" fill="url(#sp)"/><circle cx="116" cy="7" r="1.500" fill="#1560b8"/><circle cx="135.500" cy="19.500" r="2" fill="#1560b8"/></svg><i style="background:linear-gradient(#3cab36,#1b7a2c)"></i><span>成绩查询</span></a>
<a class="bb" style="left:490px;top:20px"><svg viewBox="0 0 139 38"><defs><radialGradient id="sp" cx=".35" cy=".3" r=".8"><stop offset="0" stop-color="#4fa0e6"/><stop offset=".5" stop-color="#0f5fbf"/><stop offset="1" stop-color="#083a8c"/></radialGradient><pattern id="gd" width="4" height="4" patternUnits="userSpaceOnUse"><rect x=".5" y=".5" width="2.600" height="2.600" fill="#bfe0f6"/></pattern><linearGradient id="gf" x1="0" y1="0" x2="0" y2="1"><stop offset="0" stop-color="#fff" stop-opacity="0"/><stop offset="1" stop-color="#fff" stop-opacity="1"/></linearGradient><mask id="gm"><rect y="8" width="139" height="22" fill="url(#gf)"/></mask></defs>
<rect y="8" width="139" height="22" fill="url(#gd)" mask="url(#gm)" opacity=".75"/>
<path d="M0 27 Q35 31 70 26 T139 21 L139 25 Q100 27 70 30 T0 31 Z" fill="#ffffff" opacity=".9"/>
<path d="M0 31 Q35 32 70 30 T139 25 L139 38 L0 38 Z" fill="#c6e5f8"/><rect y="31" width="139" height="7" fill="url(#gd)" opacity=".9"/>
<path d="M113 6 Q126 -1 134 4 Q138 10 133 19" fill="none" stroke="#5c9bd8" stroke-width=".8"/><path d="M116 9 Q128 6 136 12" fill="none" stroke="#8dbbe6" stroke-width=".6"/>
<circle cx="124.500" cy="12.500" r="6.200" fill="url(#sp)"/><circle cx="106.600" cy="7" r="3.400" fill="url(#sp)"/><circle cx="116" cy="7" r="1.500" fill="#1560b8"/><circle cx="135.500" cy="19.500" r="2" fill="#1560b8"/></svg><i style="background:linear-gradient(#2a22b4,#3a0e8c)"></i><span>考试计划</span></a>
</div>
<div class="p" id="p8" style="left:836px;top:637px;width:326px;height:175px;">
  <div class="ph"><b style="left:19px">常见问题</b><u style="left:12px;width:78px"></u></div>
<a class="sb" style="left:3px;top:53px"><svg class="d" viewBox="0 0 12 12"><path fill="#0d4f8c" d="M6 0.300 L8.300 2.900 L6 5.500 L3.700 2.900 Z M6 6.500 L8.300 9.100 L6 11.700 L3.700 9.100 Z M2.900 3.400 L5.500 6 L2.900 8.600 L0.300 6 Z M9.100 3.400 L11.700 6 L9.100 8.600 L6.500 6 Z"/></svg><span style="left:26px">报名须知</span><svg viewBox="0 0 22 22"><g stroke="#fff" stroke-width="1.500" stroke-linecap="round"><path d="M14 5.500v8.400M10.400 7.600l7.200 4.200M10.400 11.800l7.200-4.200"/></g><g stroke="#fff" stroke-width=".9" stroke-linecap="round"><path d="M19.500 1.200v3.600M18 2.100l3 1.800M18 3.900l3-1.800"/></g></svg></a>
<a class="sb" style="left:109px;top:53px"><svg class="d" viewBox="0 0 12 12"><path fill="#0d4f8c" d="M6 0.300 L8.300 2.900 L6 5.500 L3.700 2.900 Z M6 6.500 L8.300 9.100 L6 11.700 L3.700 9.100 Z M2.900 3.400 L5.500 6 L2.900 8.600 L0.300 6 Z M9.100 3.400 L11.700 6 L9.100 8.600 L6.500 6 Z"/></svg><span style="left:29px">报名流程</span><svg viewBox="0 0 22 22"><g stroke="#fff" stroke-width="1.500" stroke-linecap="round"><path d="M14 5.500v8.400M10.400 7.600l7.200 4.200M10.400 11.800l7.200-4.200"/></g><g stroke="#fff" stroke-width=".9" stroke-linecap="round"><path d="M19.500 1.200v3.600M18 2.100l3 1.800M18 3.900l3-1.800"/></g></svg></a>
<a class="sb" style="left:215px;top:53px"><svg class="d" viewBox="0 0 12 12"><path fill="#0d4f8c" d="M6 0.300 L8.300 2.900 L6 5.500 L3.700 2.900 Z M6 6.500 L8.300 9.100 L6 11.700 L3.700 9.100 Z M2.900 3.400 L5.500 6 L2.900 8.600 L0.300 6 Z M9.100 3.400 L11.700 6 L9.100 8.600 L6.500 6 Z"/></svg><span style="left:25px">相关培训</span><svg viewBox="0 0 22 22"><g stroke="#fff" stroke-width="1.500" stroke-linecap="round"><path d="M14 5.500v8.400M10.400 7.600l7.200 4.200M10.400 11.800l7.200-4.200"/></g><g stroke="#fff" stroke-width=".9" stroke-linecap="round"><path d="M19.500 1.200v3.600M18 2.100l3 1.800M18 3.900l3-1.800"/></g></svg></a>
<a class="sb" style="left:3px;top:100px"><svg class="d" viewBox="0 0 12 12"><path fill="#0d4f8c" d="M6 0.300 L8.300 2.900 L6 5.500 L3.700 2.900 Z M6 6.500 L8.300 9.100 L6 11.700 L3.700 9.100 Z M2.900 3.400 L5.500 6 L2.900 8.600 L0.300 6 Z M9.100 3.400 L11.700 6 L9.100 8.600 L6.500 6 Z"/></svg><span style="left:29px">报考条件</span><svg viewBox="0 0 22 22"><g stroke="#fff" stroke-width="1.500" stroke-linecap="round"><path d="M14 5.500v8.400M10.400 7.600l7.200 4.200M10.400 11.800l7.200-4.200"/></g><g stroke="#fff" stroke-width=".9" stroke-linecap="round"><path d="M19.500 1.200v3.600M18 2.100l3 1.800M18 3.900l3-1.800"/></g></svg></a>
</div>

<!-- ROW 4 -->
<div class="p w" id="p9" style="left:164px;top:729px;width:284px;height:140px;">
<a class="bn" style="top:20px"><div><svg viewBox="0 0 239 44"><defs><pattern id="dm" width="8" height="8" patternUnits="userSpaceOnUse"><path d="M4 .8 L5 3.200 L7.200 4 L5 4.800 L4 7.200 L3 4.800 L.8 4 L3 3.200 Z" fill="#ffffff" opacity=".6"/></pattern><linearGradient id="fd" x1="0" y1="0" x2="1" y2="0"><stop offset="0" stop-color="#fff" stop-opacity="0"/><stop offset="1" stop-color="#fff" stop-opacity="1"/></linearGradient><mask id="mk"><rect x="90" width="149" height="44" fill="url(#fd)"/></mask><radialGradient id="bl" cx="0" cy="1" r="1"><stop offset="0" stop-color="#3ba3e0" stop-opacity=".85"/><stop offset=".55" stop-color="#5fb7e8" stop-opacity=".45"/><stop offset="1" stop-color="#9fd3f0" stop-opacity="0"/></radialGradient></defs>
<rect width="110" height="44" fill="url(#bl)"/>
<rect x="90" width="149" height="44" fill="#c9e3f3" mask="url(#mk)" opacity=".7"/><rect x="90" width="149" height="44" fill="url(#dm)" mask="url(#mk)"/>
<circle cx="3" cy="3" r="2.8" fill="#fdf6f4"/><circle cx="3" cy="3" r="0.98" fill="#7cc3ea"/><circle cx="9" cy="5" r="2.6" fill="#fdf6f4"/><circle cx="9" cy="5" r="0.91" fill="#7cc3ea"/><circle cx="15" cy="2.5" r="2.6" fill="#fdf6f4"/><circle cx="15" cy="2.5" r="0.91" fill="#7cc3ea"/><circle cx="21" cy="5.5" r="2.4" fill="#fdf6f4"/><circle cx="21" cy="5.5" r="0.84" fill="#7cc3ea"/><circle cx="27" cy="2.5" r="2.4" fill="#fdf6f4"/><circle cx="27" cy="2.5" r="0.84" fill="#7cc3ea"/><circle cx="33" cy="5" r="2.1" fill="#fdf6f4"/><circle cx="33" cy="5" r="0.73" fill="#7cc3ea"/><circle cx="39" cy="2.5" r="2" fill="#fdf6f4"/><circle cx="39" cy="2.5" r="0.70" fill="#7cc3ea"/><circle cx="4" cy="10" r="2.6" fill="#fdf6f4"/><circle cx="4" cy="10" r="0.91" fill="#7cc3ea"/><circle cx="10" cy="11" r="2.3" fill="#fdf6f4"/><circle cx="10" cy="11" r="0.80" fill="#7cc3ea"/><circle cx="3" cy="17" r="2.4" fill="#fdf6f4"/><circle cx="3" cy="17" r="0.84" fill="#7cc3ea"/><circle cx="8" cy="17" r="2" fill="#fdf6f4"/><circle cx="8" cy="17" r="0.70" fill="#7cc3ea"/><circle cx="15" cy="9" r="2.2" fill="#fdf6f4"/><circle cx="15" cy="9" r="0.77" fill="#7cc3ea"/><circle cx="3" cy="24" r="2.2" fill="#fdf6f4"/><circle cx="3" cy="24" r="0.77" fill="#7cc3ea"/><circle cx="21" cy="11" r="1.8" fill="#fdf6f4"/><circle cx="21" cy="11" r="0.63" fill="#7cc3ea"/><circle cx="4" cy="31" r="1.9" fill="#fdf6f4"/><circle cx="4" cy="31" r="0.66" fill="#7cc3ea"/><circle cx="2" cy="37" r="1.6" fill="#fdf6f4"/><circle cx="2" cy="37" r="0.56" fill="#7cc3ea"/><circle cx="46" cy="3" r="1.7" fill="#fdf6f4"/><circle cx="46" cy="3" r="0.59" fill="#7cc3ea"/><circle cx="58" cy="2.5" r="1.9" fill="#fdf6f4"/><circle cx="58" cy="2.5" r="0.66" fill="#7cc3ea"/><circle cx="64" cy="4" r="1.6" fill="#fdf6f4"/><circle cx="64" cy="4" r="0.56" fill="#7cc3ea"/><circle cx="70" cy="2" r="1.4" fill="#fdf6f4"/><circle cx="70" cy="2" r="0.49" fill="#7cc3ea"/><circle cx="61" cy="7" r="1.3" fill="#fdf6f4"/><circle cx="61" cy="7" r="0.45" fill="#7cc3ea"/><circle cx="76" cy="3.5" r="1.2" fill="#fdf6f4"/><circle cx="76" cy="3.5" r="0.42" fill="#7cc3ea"/><circle cx="7" cy="8" r="1.2" fill="#2f97dd"/><circle cx="18" cy="7" r="1.1" fill="#2f97dd"/><circle cx="12" cy="3" r="0.9" fill="#2f97dd"/><circle cx="25" cy="8" r="1" fill="#2f97dd"/><circle cx="6" cy="14" r="1.1" fill="#2f97dd"/><circle cx="12" cy="15" r="1" fill="#2f97dd"/><circle cx="6" cy="21" r="1" fill="#2f97dd"/><circle cx="62" cy="5" r="1.2" fill="#2f97dd"/><circle cx="66" cy="7" r="1" fill="#2f97dd"/><circle cx="30" cy="8" r="0.9" fill="#2f97dd"/><circle cx="36" cy="7" r="0.8" fill="#2f97dd"/><circle cx="9" cy="21" r="1.4" fill="#5bb35c"/><circle cx="4" cy="28" r="1.1" fill="#5bb35c"/><circle cx="13" cy="18" r="1" fill="#5bb35c"/><circle cx="6" cy="34" r="0.9" fill="#5bb35c"/><path d="M72 0 V44" stroke="#ffffff" stroke-width=".6" opacity=".5"/></svg><span>全国卫生专业技术资格考试</span></div></a>
<a class="bn" style="top:75px"><div><svg viewBox="0 0 239 44"><defs><pattern id="dm" width="8" height="8" patternUnits="userSpaceOnUse"><path d="M4 .8 L5 3.200 L7.200 4 L5 4.800 L4 7.200 L3 4.800 L.8 4 L3 3.200 Z" fill="#ffffff" opacity=".6"/></pattern><linearGradient id="fd" x1="0" y1="0" x2="1" y2="0"><stop offset="0" stop-color="#fff" stop-opacity="0"/><stop offset="1" stop-color="#fff" stop-opacity="1"/></linearGradient><mask id="mk"><rect x="90" width="149" height="44" fill="url(#fd)"/></mask><radialGradient id="bl" cx="0" cy="1" r="1"><stop offset="0" stop-color="#3ba3e0" stop-opacity=".85"/><stop offset=".55" stop-color="#5fb7e8" stop-opacity=".45"/><stop offset="1" stop-color="#9fd3f0" stop-opacity="0"/></radialGradient></defs>
<rect width="110" height="44" fill="url(#bl)"/>
<rect x="90" width="149" height="44" fill="#c9e3f3" mask="url(#mk)" opacity=".7"/><rect x="90" width="149" height="44" fill="url(#dm)" mask="url(#mk)"/>
<circle cx="3" cy="3" r="2.8" fill="#fdf6f4"/><circle cx="3" cy="3" r="0.98" fill="#7cc3ea"/><circle cx="9" cy="5" r="2.6" fill="#fdf6f4"/><circle cx="9" cy="5" r="0.91" fill="#7cc3ea"/><circle cx="15" cy="2.5" r="2.6" fill="#fdf6f4"/><circle cx="15" cy="2.5" r="0.91" fill="#7cc3ea"/><circle cx="21" cy="5.5" r="2.4" fill="#fdf6f4"/><circle cx="21" cy="5.5" r="0.84" fill="#7cc3ea"/><circle cx="27" cy="2.5" r="2.4" fill="#fdf6f4"/><circle cx="27" cy="2.5" r="0.84" fill="#7cc3ea"/><circle cx="33" cy="5" r="2.1" fill="#fdf6f4"/><circle cx="33" cy="5" r="0.73" fill="#7cc3ea"/><circle cx="39" cy="2.5" r="2" fill="#fdf6f4"/><circle cx="39" cy="2.5" r="0.70" fill="#7cc3ea"/><circle cx="4" cy="10" r="2.6" fill="#fdf6f4"/><circle cx="4" cy="10" r="0.91" fill="#7cc3ea"/><circle cx="10" cy="11" r="2.3" fill="#fdf6f4"/><circle cx="10" cy="11" r="0.80" fill="#7cc3ea"/><circle cx="3" cy="17" r="2.4" fill="#fdf6f4"/><circle cx="3" cy="17" r="0.84" fill="#7cc3ea"/><circle cx="8" cy="17" r="2" fill="#fdf6f4"/><circle cx="8" cy="17" r="0.70" fill="#7cc3ea"/><circle cx="15" cy="9" r="2.2" fill="#fdf6f4"/><circle cx="15" cy="9" r="0.77" fill="#7cc3ea"/><circle cx="3" cy="24" r="2.2" fill="#fdf6f4"/><circle cx="3" cy="24" r="0.77" fill="#7cc3ea"/><circle cx="21" cy="11" r="1.8" fill="#fdf6f4"/><circle cx="21" cy="11" r="0.63" fill="#7cc3ea"/><circle cx="4" cy="31" r="1.9" fill="#fdf6f4"/><circle cx="4" cy="31" r="0.66" fill="#7cc3ea"/><circle cx="2" cy="37" r="1.6" fill="#fdf6f4"/><circle cx="2" cy="37" r="0.56" fill="#7cc3ea"/><circle cx="46" cy="3" r="1.7" fill="#fdf6f4"/><circle cx="46" cy="3" r="0.59" fill="#7cc3ea"/><circle cx="58" cy="2.5" r="1.9" fill="#fdf6f4"/><circle cx="58" cy="2.5" r="0.66" fill="#7cc3ea"/><circle cx="64" cy="4" r="1.6" fill="#fdf6f4"/><circle cx="64" cy="4" r="0.56" fill="#7cc3ea"/><circle cx="70" cy="2" r="1.4" fill="#fdf6f4"/><circle cx="70" cy="2" r="0.49" fill="#7cc3ea"/><circle cx="61" cy="7" r="1.3" fill="#fdf6f4"/><circle cx="61" cy="7" r="0.45" fill="#7cc3ea"/><circle cx="76" cy="3.5" r="1.2" fill="#fdf6f4"/><circle cx="76" cy="3.5" r="0.42" fill="#7cc3ea"/><circle cx="7" cy="8" r="1.2" fill="#2f97dd"/><circle cx="18" cy="7" r="1.1" fill="#2f97dd"/><circle cx="12" cy="3" r="0.9" fill="#2f97dd"/><circle cx="25" cy="8" r="1" fill="#2f97dd"/><circle cx="6" cy="14" r="1.1" fill="#2f97dd"/><circle cx="12" cy="15" r="1" fill="#2f97dd"/><circle cx="6" cy="21" r="1" fill="#2f97dd"/><circle cx="62" cy="5" r="1.2" fill="#2f97dd"/><circle cx="66" cy="7" r="1" fill="#2f97dd"/><circle cx="30" cy="8" r="0.9" fill="#2f97dd"/><circle cx="36" cy="7" r="0.8" fill="#2f97dd"/><circle cx="9" cy="21" r="1.4" fill="#5bb35c"/><circle cx="4" cy="28" r="1.1" fill="#5bb35c"/><circle cx="13" cy="18" r="1" fill="#5bb35c"/><circle cx="6" cy="34" r="0.9" fill="#5bb35c"/><path d="M72 0 V44" stroke="#ffffff" stroke-width=".6" opacity=".5"/></svg><span>高级卫生专业技术资格考试</span></div></a>
</div>
<div class="p w" id="p10" style="left:458px;top:729px;width:368px;height:140px;">
  <div class="ph"><b style="left:19px">政策文件</b><b class="g" style="left:97px">合格标准</b><b class="g" style="left:175px">报考条件</b><u style="left:12px;width:78px"></u></div>
  <ul class="l" style="top:48px">
    <li><a>资格考试报名证明事项告知承诺制...</a><span>2019-06-18</span></li>
    <li><a>资格考试报名证明事项告知承诺制...</a><span>2019-06-17</span></li>
    <li><a>什么是专业技术人员资格考试报名...</a><span>2019-06-17</span></li>
  </ul>
</div>
<div class="p" id="p11" style="left:836px;top:822px;width:326px;height:60px;">
  <div class="ph"><b style="left:19px">用户登录</b><u style="left:12px;width:78px"></u></div>
</div>
</body>
</html>
